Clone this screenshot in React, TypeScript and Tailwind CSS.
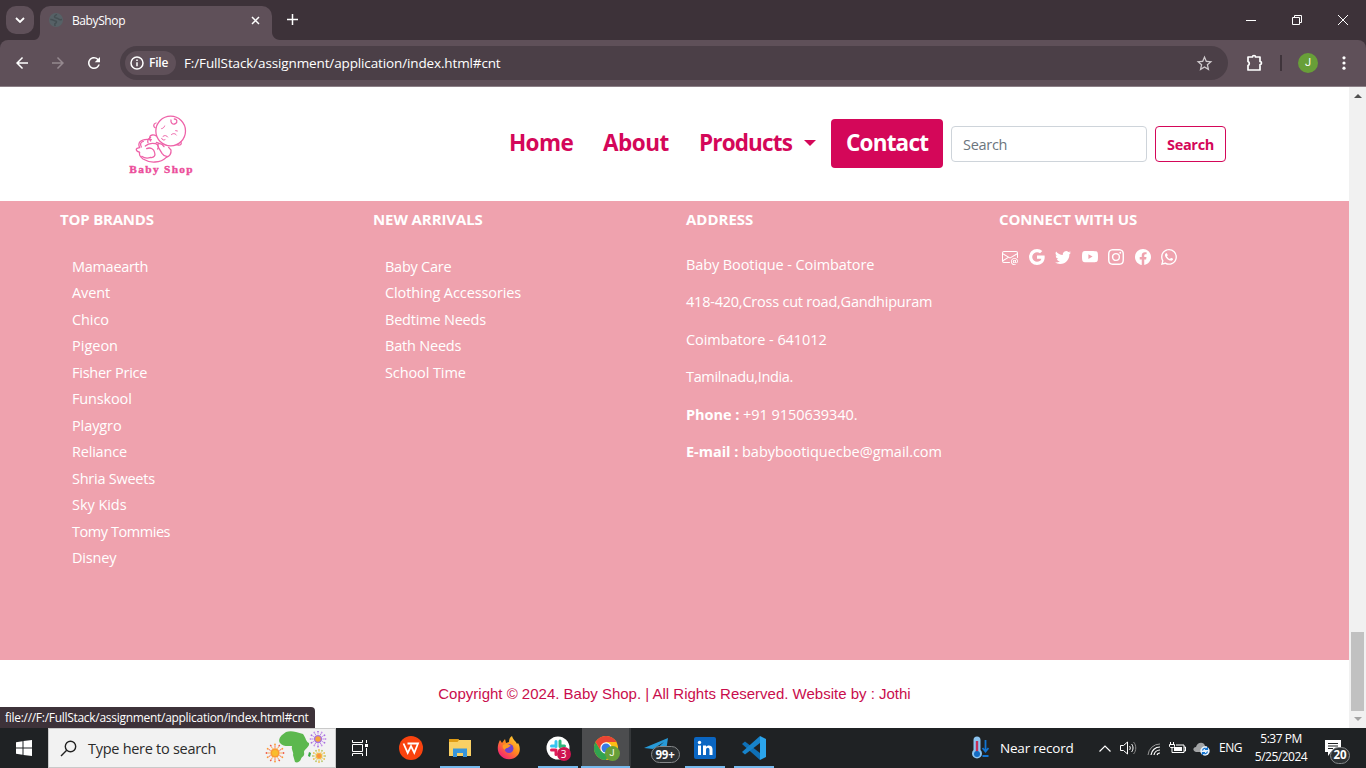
import React from "react";
import {
  BsEnvelopeAt,
  BsGoogle,
  BsTwitter,
  BsYoutube,
  BsInstagram,
  BsFacebook,
  BsWhatsapp,
} from "react-icons/bs";
import { MdArrowBack, MdArrowForward, MdRefresh, MdStarBorder } from "react-icons/md";

const brands = [
  ["Mamaearth", "tracking-[-0.3px]"],
  ["Avent", "tracking-[-0.1px]"],
  ["Chico", "tracking-[-0.1px]"],
  ["Pigeon", "tracking-[0px]"],
  ["Fisher Price", "tracking-[-0.25px]"],
  ["Funskool", "tracking-[-0.15px]"],
  ["Playgro", "tracking-[-0.1px]"],
  ["Reliance", "tracking-[-0.2px]"],
  ["Shria Sweets", "tracking-[-0.25px]"],
  ["Sky Kids", "tracking-[-0.05px]"],
  ["Tomy Tommies", "tracking-[-0.45px]"],
  ["Disney", "tracking-[-0.2px]"],
];

const arrivals = [
  ["Baby Care", "tracking-[-0.25px]"],
  ["Clothing Accessories", "tracking-[-0.1px]"],
  ["Bedtime Needs", "tracking-[-0.2px]"],
  ["Bath Needs", "tracking-[-0.2px]"],
  ["School Time", "tracking-[-0.1px]"],
];

const socials = [BsEnvelopeAt, BsGoogle, BsTwitter, BsYoutube, BsInstagram, BsFacebook, BsWhatsapp];

function TabStrip() {
  return (
    <div className="flex h-10 bg-[#3d3239] text-white">
      <div className="ml-[6px] mt-[6px] flex h-7 w-7 items-center justify-center rounded-[10px] bg-[#5f5059]">
        <svg width="10" height="6" viewBox="0 0 10 6" fill="none" stroke="white" strokeWidth="1.8"><path d="M1 1l4 4 4-4" /></svg>
      </div>
      <div className="flex h-10 items-end">
        <svg width="6" height="8" viewBox="0 0 6 8"><path d="M6 0v8H0C4 8 6 4 6 0z" fill="#5f5059" /></svg>
      </div>
      <div className="mt-[6px] flex h-[34px] w-[232px] items-center rounded-t-[10px] bg-[#5f5059] pb-[6px] pl-2">
        <svg width="16" height="16" viewBox="0 0 16 16">
          <circle cx="8" cy="8" r="7" fill="#566166" />
          <path d="M2.300 7.500c3-.4 3.500 1.500 5.300 1.500 1.700 0 .6 2.200-.8 2.900L7 14M8.500 2c-.3 2-2.200 1.500-2 3s2.500.6 4 2c1.200 1.100 3.200.5 3.500.5" fill="none" stroke="#454f53" strokeWidth="1.500" />
        </svg>
        <span className="ml-2 mt-[2px] text-[12px] tracking-[-0.4px]">BabyShop</span>
        <svg className="ml-auto mr-3" width="9" height="9" viewBox="0 0 9 9" stroke="white" strokeWidth="1.500"><path d="M1 1l7 7M8 1L1 8" /></svg>
      </div>
      <div className="flex h-10 items-end">
        <svg width="8" height="8" viewBox="0 0 8 8"><path d="M0 0v8h8C3 8 0 4 0 0z" fill="#5f5059" /></svg>
      </div>
      <svg className="ml-[7px] mt-[14px]" width="11" height="11" viewBox="0 0 11 11" stroke="white" strokeWidth="1.500"><path d="M5.500 0v11M0 5.500h11" /></svg>
      <div className="ml-auto mr-[18px] flex h-10 items-center gap-[36px]">
        <svg width="10" height="10" viewBox="0 0 10 10" stroke="white"><path d="M0 5.500h10" /></svg>
        <svg width="10" height="10" viewBox="0 0 10 10" fill="none" stroke="white"><path d="M.5 2.500h7v7h-7zM2.500 2.500v-2h7v7h-2" /></svg>
        <svg width="10" height="10" viewBox="0 0 10 10" stroke="white"><path d="M0 0l10 10M10 0L0 10" /></svg>
      </div>
    </div>
  );
}

function Toolbar() {
  return (
    <div className="h-[47px] bg-[#3d3239]">
      <div className="flex h-[47px] items-center rounded-t-[8px] border-b border-[#8b7f86] bg-[#5f5059] text-white">
        <MdArrowBack className="ml-[13px]" size={18} />
        <MdArrowForward className="ml-[18px] text-[#95898f]" size={18} />
        <MdRefresh className="ml-[18px]" size={18} />
        <div className="ml-[17px] flex h-[34px] w-[1108px] items-center rounded-full bg-[#4b3f47] px-[5px]">
          <div className="flex h-6 w-[51px] items-center rounded-full bg-[#5f5059] pl-[5px]">
            <svg width="14" height="14" viewBox="0 0 14 14" fill="none" stroke="white" strokeWidth="1.500"><circle cx="7" cy="7" r="6" /><path d="M7 6.200v4M7 3.600v1.500" /></svg>
            <span className="ml-[5px] text-[12px] font-semibold tracking-[-0.2px]">File</span>
          </div>
          <span className="ml-2 mt-px text-[13.5px] tracking-[-0.13px]">F:/FullStack/assignment/application/index.html#cnt</span>
          <MdStarBorder className="ml-auto mr-[9px] text-[#cfc9cc]" size={19} />
        </div>
        <svg className="ml-[18px]" width="18" height="18" viewBox="0 0 18 18" fill="none" stroke="white" strokeWidth="1.700" strokeLinejoin="round">
          <path d="M2 3h4.500a1.500 1.500 0 0 1 3 0H14v4.500a1.500 1.500 0 0 1 0 3V16H2v-4.500a2.200 2.200 0 0 0 0-4z" />
        </svg>
        <div className="ml-[16px] h-4 w-[2px] bg-[#3f343b]" />
        <div className="ml-[16px] flex h-5 w-5 items-center justify-center rounded-full bg-[#689f38] pt-px font-['Roboto',sans-serif] text-[11px]">J</div>
        <svg className="ml-[24px]" width="4" height="14" viewBox="0 0 4 14" fill="white"><circle cx="2" cy="1.800" r="1.600" /><circle cx="2" cy="7" r="1.600" /><circle cx="2" cy="12.200" r="1.600" /></svg>
      </div>
    </div>
  );
}

function Logo() {
  return (
    <svg width="70" height="68" viewBox="0 0 210 204" fill="none" stroke="#ee62a8" strokeWidth="3.800" strokeLinecap="round">
      <circle cx="134" cy="60" r="44.500" />
      <path d="M90 36c-9 2-8 12-3 14M165 93c3 8-3 12-12 8" />
      <path d="M135 27c-2 9 6 15 13 11 8-5 5-14-3-14" />
      <path d="M107 53c3 0 8-4 9-8M111 76c5-4 11-3 14 2M136 71c5-5 12-4 15 1M149 59l5 1M107 82c2 6 6 6 10 4" strokeWidth="3" />
      <path d="M91 75c-8-5-18-4-20 3-2 6 2 10 3 12M74 80c-9 3-10 10-8 15" />
      <path d="M76 86c-12-2-28 0-34 6-5 6-4 12-1 18l-8 2c-5 3-1 10 6 11M41 124c-3 8 2 14 10 20 10 6 22 10 36 9 16-1 25-5 34-14" />
      <path d="M52 91c-9 2-10 9-6 17M58 105c8-8 22-9 31-7 10 4 9 12 6 16M62 113c10-5 22 0 24 12 3 9-2 14-10 15M47 136c9 6 17 7 27 3" />
      <path d="M121 139c12-4 15-12 14-22l-7-8M98 98c-5 3-2 9 1 14l9 15c4 6 10 10 16 9M99 98c7-2 12 4 15 9M91 94l9 3" />
      <text x="10" y="186" textLength="190" fontFamily="Liberation Serif, serif" fontWeight="bold" fontSize="34" fill="#ec4f9b" stroke="#ec4f9b" strokeWidth="1.200">Baby Shop</text>
    </svg>
  );
}

function ShopHeader() {
  return (
    <header className="flex h-[114px] items-center bg-white text-[#d40759]">
      <div className="ml-[126px] h-[68px] w-[70px] translate-y-px"><Logo /></div>
      <nav className="ml-auto flex items-center pb-[2px] text-[22.5px] font-bold">
        <a className="w-[94px]"><span className="tracking-[-0.6px]">Home</span></a>
        <a className="w-[96px]"><span className="tracking-[-0.5px]">About</span></a>
        <a className="flex w-[132px] items-center">
          <span className="w-[93px] tracking-[-0.85px]">Products</span>
          <svg className="ml-[12px]" width="12" height="6" viewBox="0 0 12 6" fill="#d40759"><path d="M0 0h12L6 6z" /></svg>
        </a>
        <a className="flex h-[49px] w-[112px] items-center rounded-[4px] bg-[#d40759] pl-[15px] text-white"><span className="tracking-[-0.8px]">Contact</span></a>
      </nav>
      <div className="ml-2 mr-[123px] flex gap-2">
        <div className="flex h-9 w-[196px] items-center rounded-[4px] border border-[#ced4da] pl-[11px] pt-px text-[14.5px] tracking-[-0.3px] text-[#6c757d]">Search</div>
        <button className="h-9 w-[71px] rounded-[4px] border border-[#d40759] pt-px text-[14.5px] font-bold tracking-[-0.3px]">Search</button>
      </div>
    </header>
  );
}

function LinkColumn({ title, titleClass, items }: { title: string; titleClass: string; items: string[][] }) {
  return (
    <div className="w-[313px]">
      <h6 className={`text-[15px] font-bold leading-[18px] ${titleClass}`}>{title}</h6>
      <ul className="mt-[25.500px] pl-3 text-[14.5px]">
        {items.map(([label, cls]) => (
          <li key={label} className="h-[26.5px] leading-[26.5px]"><span className={cls}>{label}</span></li>
        ))}
      </ul>
    </div>
  );
}

function ContactSection() {
  return (
    <section className="flex h-[459px] bg-[#efa2ae] pl-[60px] pt-[9px] text-white">
      <LinkColumn title="TOP BRANDS" titleClass="tracking-[-0.2px]" items={brands} />
      <LinkColumn title="NEW ARRIVALS" titleClass="tracking-[-0.1px]" items={arrivals} />
      <div className="w-[313px]">
        <h6 className="text-[15px] font-bold leading-[18px] tracking-[0px]">ADDRESS</h6>
        <div className="mt-[25.500px] flex flex-col gap-[15px] whitespace-nowrap text-[14.5px] leading-[22.5px]">
          <p className="tracking-[-0.1px]">Baby Bootique - Coimbatore</p>
          <p className="tracking-[-0.22px]">418-420,Cross cut road,Gandhipuram</p>
          <p className="tracking-[-0.05px]">Coimbatore - 641012</p>
          <p className="tracking-[-0.35px]">Tamilnadu,India.</p>
          <p className="tracking-[-0.05px]"><b>Phone :</b> +91 9150639340.</p>
          <p className="tracking-[-0.03px]"><b>E-mail :</b> babybootiquecbe@gmail.com</p>
        </div>
      </div>
      <div>
        <h6 className="text-[15px] font-bold leading-[18px] tracking-[-0.1px]">CONNECT WITH US</h6>
        <div className="ml-[3px] mt-[20.500px] flex gap-[10.500px]">
          {socials.map((Icon, i) => <Icon key={i} size={16} />)}
        </div>
      </div>
    </section>
  );
}

function Scrollbar() {
  return (
    <div className="flex w-[17px] flex-col items-center bg-[#f1f1f1]">
      <svg className="mt-[7px]" width="8" height="4" viewBox="0 0 8 4"><path d="M0 4l4-4 4 4z" fill="#505050" /></svg>
      <div className="mt-[534px] h-[79px] w-[13px] bg-[#c1c1c1]" />
      <svg className="mt-[6px]" width="8" height="4" viewBox="0 0 8 4"><path d="M0 0l4 4 4-4z" fill="#a3a3a3" /></svg>
    </div>
  );
}

function Africa() {
  const ray = (n: number) => Array.from({ length: n }, (_, i) => (i * 360) / n);
  const flower = (x: number, y: number, r: number, a: string, b: string, c: string) => (
    <g transform={`translate(${x} ${y})`}>
      {ray(12).map((d, i) => (
        <g key={d} transform={`rotate(${d})`}>
          <path d={`M0 ${-r * 0.6}V${-r + 1}`} stroke={i % 2 ? a : b} strokeWidth=".8" />
          <circle cy={-r} r=".9" fill={i % 2 ? b : a} />
        </g>
      ))}
      <circle r={r * 0.55} fill={a} /><circle r={r * 0.36} fill={c} />
    </g>
  );
  return (
    <svg width="62" height="34" viewBox="0 0 62 34">
      <path d="M17 4l4-3c3-1 6-1 10 0l7 2c3 4 3 8 6 9 1 4-5 6-5 9 1 5-2 4-3 7-1 3-4 4-6 3l-2-7c1-3-2-5-1-9-4 0-9 1-12-3-2-3 0-6 2-8z" fill="#5cb84e" />
      <path d="M44 21l2 1-1 4-2-1z" fill="#39a845" />
      {flower(10, 22, 8.500, "#fb9a33", "#f05a4a", "#f8bd2c")}
      {flower(53, 8, 7.500, "#a970e0", "#c592eb", "#f4a63b")}
      {flower(54, 25, 6, "#f2be46", "#b5c768", "#fa9240")}
    </svg>
  );
}

function AppCell({ children, line = "", active = false }: { children: React.ReactNode; line?: string; active?: boolean }) {
  return (
    <div className={`flex h-10 w-[49px] flex-col items-center ${active ? "border-r-2 border-[#35383a] bg-[#4c4d4f]" : ""}`}>
      <div className="flex h-[38px] items-center justify-center pt-[2px]">{children}</div>
      <div className={`h-[2px] ${line}`} />
    </div>
  );
}

function Taskbar() {
  return (
    <div className="flex h-10 items-center bg-[#1f2224] text-white">
      <svg className="ml-4" width="16" height="16" viewBox="0 0 16 16" fill="white"><path d="M0 2.200L6.500 1.300v6.200H0zM7.500 1.100L16 0v7.500H7.500zM0 8.500h6.500v6.200L0 13.800zM7.500 8.500H16V16l-8.500-1.100z" /></svg>
      <div className="ml-4 mr-px flex h-10 w-[288px] items-center border border-[#c9c9c9] bg-[#f2f2f2] pl-[11px] text-[#2b2b2b]">
        <svg width="17" height="17" viewBox="0 0 17 17" fill="none" stroke="#222" strokeWidth="1.400"><circle cx="10.500" cy="6.500" r="5.200" /><path d="M6.700 10.300L1 16" /></svg>
        <span className="ml-[11px] mt-px text-[14.5px] tracking-[-0.28px]">Type here to search</span>
        <div className="ml-auto mr-[8px]"><Africa /></div>
      </div>
      <AppCell>
        <svg className="-ml-[4px]" width="16" height="16" viewBox="0 0 16 16" fill="none" stroke="white" strokeWidth="1"><path d="M.5 0v2.500h10V0M.5 16v-2.500h10V16M.5 4.500h10v7H.5zM14.500 0v3M14.500 8v8" /><path d="M13 4h3v3h-3z" fill="white" stroke="none" /></svg>
      </AppCell>
      <AppCell>
        <svg width="24" height="24" viewBox="0 0 24 24"><circle cx="12" cy="12" r="12" fill="#f9430f" /><path d="M4.500 7.500l4.200 9.300L12 10l3.300 6.800L19 7.500h-7.500M8.500 7.500h3.200" fill="none" stroke="white" strokeWidth="1.800" /></svg>
      </AppCell>
      <AppCell line="w-10 bg-[#76b9ed]">
        <svg width="22" height="20" viewBox="0 0 22 20"><path d="M0 1h9l1 1h12v16H0z" fill="#f9d064" /><path d="M0 1h9l1 1-1.500 2H0z" fill="#e09c14" /><path d="M4 10.500h14V19h-4v-4H8v4H4z" fill="#3996da" /></svg>
      </AppCell>
      <AppCell>
        <svg width="24" height="24" viewBox="0 0 24 24">
          <defs><linearGradient id="fx" x1="1" y1="0" x2=".2" y2="1"><stop stopColor="#ffe43a" /><stop offset=".5" stopColor="#ff8a1e" /><stop offset="1" stopColor="#f5167d" /></linearGradient></defs>
          <path d="M3 4l2 3 3-4 1 4 3-1c0-3 1-5 3-6 1 4 4 5 5 8l1-1c3 5 2 10-1 13-5 5-13 4-17-1C0 15 0 9 3 4z" fill="url(#fx)" />
          <circle cx="12" cy="12.500" r="4.500" fill="#7143d0" /><path d="M6 9c3-2 6-1 8 1-2 0-2 2-4 2-1 0-2 1-2 2-2-1-3-3-2-5z" fill="#ff9b22" />
        </svg>
      </AppCell>
      <AppCell line="w-10 bg-[#76b9ed]">
        <div className="relative">
          <svg width="24" height="24" viewBox="0 0 24 24"><circle cx="12" cy="12" r="11.500" fill="white" />
            <g strokeWidth="3" strokeLinecap="round"><path d="M10 5.500v5M5.500 10h4" stroke="#36c5f0" /><path d="M14 5v5.500M14.500 10h4" stroke="#2eb67d" /><path d="M5.500 14h4.500M10 14.500v4" stroke="#e01e5a" /><path d="M14 14h4.500M14 15v4" stroke="#ecb22e" /></g></svg>
          <div className="absolute left-[11px] top-[11px] flex h-[14px] w-[14px] items-center justify-center rounded-full bg-[#cf1450] text-[10px]">3</div>
        </div>
      </AppCell>
      <AppCell active line="w-[49px] bg-[#76b9ed]">
        <div className="relative">
          <svg width="24" height="24" viewBox="0 0 24 24"><circle cx="12" cy="12" r="12" fill="#fdbd14" /><path d="M1.600 6A12 12 0 0 0 12 24l5.200-9L7 15z" fill="#31a350" /><path d="M1.600 6A12 12 0 0 1 22.400 6H12l-5 9z" fill="#e94435" /><circle cx="12" cy="12" r="5.700" fill="white" /><circle cx="12" cy="12" r="4.500" fill="#3879e5" /></svg>
          <div className="absolute left-[11px] top-[10px] flex h-[15px] w-[15px] items-center justify-center rounded-full bg-[#689f38] font-['Roboto',sans-serif] text-[9px]">J</div>
        </div>
      </AppCell>
      <AppCell>
        <div className="relative h-6 w-6">
          <svg width="24" height="24" viewBox="0 0 24 24"><path d="M0 12L24 2l-3 20-6-4-3 2-1-6 9-8-11 7z" fill="#279ad8" /></svg>
          <div className="absolute left-[7px] top-[10px] flex h-[17px] w-[29px] items-center justify-center rounded-full border border-[#85888a] bg-[#2d3133] text-[11.500px] font-bold tracking-[-0.2px]">99+</div>
        </div>
      </AppCell>
      <AppCell line="w-10 bg-[#76b9ed]">
        <svg width="22" height="22" viewBox="0 0 22 22"><rect width="22" height="22" rx="2" fill="#0a66c2" /><path d="M4 8.500h3V18H4zM9 8.500h3v1.400c1-2.200 6.500-2.300 6.500 2.100v6h-3v-5c0-3-3.500-3-3.500 0v5H9z" fill="white" /><circle cx="5.500" cy="5.500" r="1.700" fill="white" /></svg>
      </AppCell>
      <AppCell line="w-10 bg-[#76b9ed]">
        <svg width="24" height="24" viewBox="0 0 24 24"><path d="M0 8l3-2.500L18 17v7z" fill="#0f70b6" /><path d="M18 0v7L3 18.500 0 16z" fill="#1783ca" /><path d="M18 0l6 3v18l-6 3z" fill="#2ba5ec" /></svg>
      </AppCell>
      <div className="ml-auto flex h-10 items-center">
        <svg width="18" height="24" viewBox="0 0 18 24"><path d="M2.500 4a3.500 3.500 0 0 1 7 0v10a5 5 0 1 1-7 0z" fill="#8cc4f0" /><path d="M6 5v12" stroke="#c42e58" strokeWidth="2.400" /><circle cx="6" cy="18" r="3" fill="#136bc3" /><path d="M14.500 4v11M11.500 12l3 3.500 3-3.500M11.500 20h6" stroke="#1274d1" strokeWidth="1.800" fill="none" /></svg>
        <span className="ml-[11px] w-[99px] text-[13.5px] tracking-[-0.2px]">Near record</span>
        <svg width="12" height="7" viewBox="0 0 12 7" fill="none" stroke="white" strokeWidth="1.200"><path d="M.5 6.500L6 1l5.500 5.500" /></svg>
        <svg className="ml-[9px]" width="17" height="16" viewBox="0 0 17 16" fill="none" stroke="white"><path d="M.5 5.500h3l4-3.500v12l-4-3.500h-3zM9.500 6c1 1 1 3 0 4M11.500 4c2 2 2 6 0 8" /><path d="M13.500 2c3 3 3 9 0 12" stroke="#888" /></svg>
        <svg className="ml-[10px] mt-[3px]" width="14" height="13" viewBox="0 0 14 13" fill="none" stroke="white"><path d="M1 12A12 12 0 0 1 13 1" stroke="#999" /><path d="M4 12a9 9 0 0 1 9-8M7 12a6 6 0 0 1 6-5M10 12a3 3 0 0 1 3-2" strokeWidth="1.200" /></svg>
        <svg className="ml-[8px]" width="17" height="12" viewBox="0 0 17 12" fill="none" stroke="white"><path d="M1.500 0v2M4.500 0v2M.5 2.500h5v2l-1 1h-3l-1-1zM3 6v4.500h12V3H7" /><path d="M5 5h8v4H5z" fill="white" stroke="none" /><path d="M15 5h1.500v4H15" /></svg>
        <svg className="ml-[7px] mt-[2px]" width="18" height="14" viewBox="0 0 18 14"><path d="M3 10C-1 9 0 5 3 5c1-5 8-6 9-1 4 0 5 6 1 6z" fill="#a2a4a5" /><circle cx="12" cy="9" r="4.700" fill="#eaf4fd" /><path d="M9.500 8.500a2.700 2.700 0 0 1 4.700-1.300M14.500 5v2.500H12M14.500 9.500a2.700 2.700 0 0 1-4.700 1.300M9.500 13v-2.500H12" stroke="#1273d0" fill="none" strokeWidth="1.200" /></svg>
        <span className="ml-[8px] w-[34px] text-[12px] tracking-[-0.5px]">ENG</span>
        <div className="flex w-[56px] flex-col items-center whitespace-nowrap text-[12px] leading-[18px] tracking-[-0.5px]"><span>5:37 PM</span><span>5/25/2024</span></div>
        <div className="relative ml-[16px] h-[17px] w-[41px]">
          <svg width="16" height="16" viewBox="0 0 16 16"><path d="M0 0h16v12H6l-3 4v-4H0z" fill="white" /><path d="M3 3.500h10M3 6h10M3 8.500h5" stroke="#1f2224" strokeWidth="1.200" /></svg>
          <div className="absolute left-[5px] top-[7px] flex h-[17px] w-[20px] items-center justify-center rounded-full border border-[#85888a] bg-[#2d3133] text-[11.500px] font-bold">20</div>
        </div>
      </div>
    </div>
  );
}

export default function App() {
  return (
    <div className="relative flex h-[768px] w-[1366px] flex-col overflow-hidden bg-white font-['Open_Sans','Noto_Sans',sans-serif]">
      <TabStrip />
      <Toolbar />
      <div className="flex h-[641px]">
        <main className="flex w-[1349px] flex-col">
          <ShopHeader />
          <ContactSection />
          <footer className="flex h-[68px] items-center justify-center bg-white font-['Liberation_Sans',sans-serif] text-[15px] text-[#c90d4c]">
            Copyright © 2024. Baby Shop. | All Rights Reserved. Website by : Jothi
          </footer>
        </main>
        <Scrollbar />
      </div>
      <Taskbar />
      <div className="absolute left-0 top-[707px] flex h-[21px] w-[315px] items-center whitespace-nowrap rounded-tr-[4px] bg-[#3d3239] pl-[5px] pt-px text-[12px] tracking-[-0.29px] text-white">
        file:///F:/FullStack/assignment/application/index.html#cnt
      </div>
    </div>
  );
}
